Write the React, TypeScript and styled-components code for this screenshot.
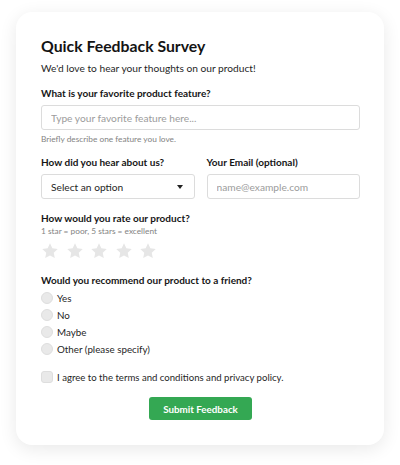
import React from 'react';
import styled, { createGlobalStyle } from 'styled-components';

const GlobalStyle = createGlobalStyle`
  * { box-sizing: border-box; }
  body {
    margin: 0;
    background: #ffffff;
    font-family: Lato, "Noto Sans", sans-serif;
    color: #1c1c1c;
  }
`;

const Page = styled.div`
  padding: 12px 16px 20px;
`;

const Card = styled.form`
  background: #fff;
  border-radius: 16px;
  box-shadow: 0 4px 18px rgba(0, 0, 0, 0.09);
  padding: 23px 24px 25px 25px;
  display: flex;
  flex-direction: column;
`;

const Title = styled.h1`
  margin: 0;
  font-size: 15.8px;
  font-weight: 700;
  line-height: 22px;
  color: #141414;
`;

const Subtitle = styled.p`
  margin: 2px 0 0;
  font-size: 10.2px;
  line-height: 18px;
  color: #1f1f1f;
`;

const Field = styled.div<{ $top?: number }>`
  display: flex;
  flex-direction: column;
  margin-top: ${p => p.$top ?? 12}px;
  min-width: 0;
`;

const Label = styled.label`
  font-size: 10px;
  font-weight: 700;
  line-height: 14px;
  color: #161616;
`;

const Hint = styled.span<{ $gap?: number }>`
  font-size: 8.3px;
  line-height: 12px;
  color: #838383;
  margin-top: ${p => p.$gap ?? 0}px;
`;

const TextInput = styled.input`
  margin-top: 5px;
  height: 25px;
  width: 100%;
  border: 1px solid #dcdcdc;
  border-radius: 3px;
  padding: 0 9px;
  font: inherit;
  font-size: 10.2px;
  color: #333;
  background: #fff;
  &::placeholder { color: #9c9c9c; }
`;

const Row = styled.div`
  display: grid;
  grid-template-columns: 1fr 1fr;
  gap: 12px;
  margin-top: 10px;
`;

const SelectBox = styled.div`
  margin-top: 5px;
  height: 25px;
  border: 1px solid #dcdcdc;
  border-radius: 3px;
  padding: 0 11px 0 9px;
  display: flex;
  align-items: center;
  justify-content: space-between;
  font-size: 10.2px;
  color: #1f1f1f;
`;

const Caret = styled.span`
  width: 0;
  height: 0;
  border-left: 3.5px solid transparent;
  border-right: 3.5px solid transparent;
  border-top: 4px solid #222;
`;

const Stars = styled.div`
  display: flex;
  gap: 6.5px;
  margin-top: 5px;
`;

const Options = styled.div`
  display: flex;
  flex-direction: column;
  gap: 4px;
  margin-top: 4.5px;
`;

const Option = styled.label<{ $size?: number }>`
  display: flex;
  align-items: center;
  gap: 4px;
  font-size: ${p => p.$size ?? 9.8}px;
  line-height: 13px;
  color: #1f1f1f;
`;

const Radio = styled.span`
  width: 12px;
  height: 12px;
  border-radius: 50%;
  background: #e9e9e9;
  border: 1px solid #dedede;
`;

const Check = styled.span`
  width: 12px;
  height: 12px;
  border-radius: 3px;
  background: #e9e9e9;
  border: 1px solid #dedede;
`;

const Agree = styled(Option)`
  margin-top: 15px;
`;

const Submit = styled.button`
  align-self: center;
  margin-top: 13.5px;
  width: 103px;
  height: 23px;
  border: none;
  border-radius: 3px;
  background: #34a853;
  color: #fff;
  font: inherit;
  font-size: 9.8px;
  font-weight: 700;
`;

const Star = () => (
  <svg width="18" height="18" viewBox="0 0 24 24">
    <path
      d="M12 1.8l3.1 6.6 7.2.9-5.3 5 1.4 7.1L12 17.9l-6.4 3.5 1.4-7.1-5.3-5 7.2-.9z"
      fill="#e6e6e6"
    />
  </svg>
);

export default function App() {
  const choices = ['Yes', 'No', 'Maybe', 'Other (please specify)'];
  return (
    <Page>
      <GlobalStyle />
      <Card onSubmit={e => e.preventDefault()}>
        <Title>Quick Feedback Survey</Title>
        <Subtitle>We'd love to hear your thoughts on our product!</Subtitle>

        <Field $top={9}>
          <Label>What is your favorite product feature?</Label>
          <TextInput placeholder="Type your favorite feature here..." />
          <Hint $gap={3}>Briefly describe one feature you love.</Hint>
        </Field>

        <Row>
          <Field $top={0}>
            <Label>How did you hear about us?</Label>
            <SelectBox>
              Select an option
              <Caret />
            </SelectBox>
          </Field>
          <Field $top={0}>
            <Label>Your Email (optional)</Label>
            <TextInput placeholder="name@example.com" />
          </Field>
        </Row>

        <Field $top={12}>
          <Label>How would you rate our product?</Label>
          <Hint>1 star = poor, 5 stars = excellent</Hint>
          <Stars>
            {[0, 1, 2, 3, 4].map(i => <Star key={i} />)}
          </Stars>
        </Field>

        <Field $top={13}>
          <Label>Would you recommend our product to a friend?</Label>
          <Options>
            {choices.map(c => (
              <Option key={c}>
                <Radio />
                {c}
              </Option>
            ))}
          </Options>
        </Field>

        <Agree $size={9.6}>
          <Check />
          I agree to the terms and conditions and privacy policy.
        </Agree>

        <Submit type="submit">Submit Feedback</Submit>
      </Card>
    </Page>
  );
}
